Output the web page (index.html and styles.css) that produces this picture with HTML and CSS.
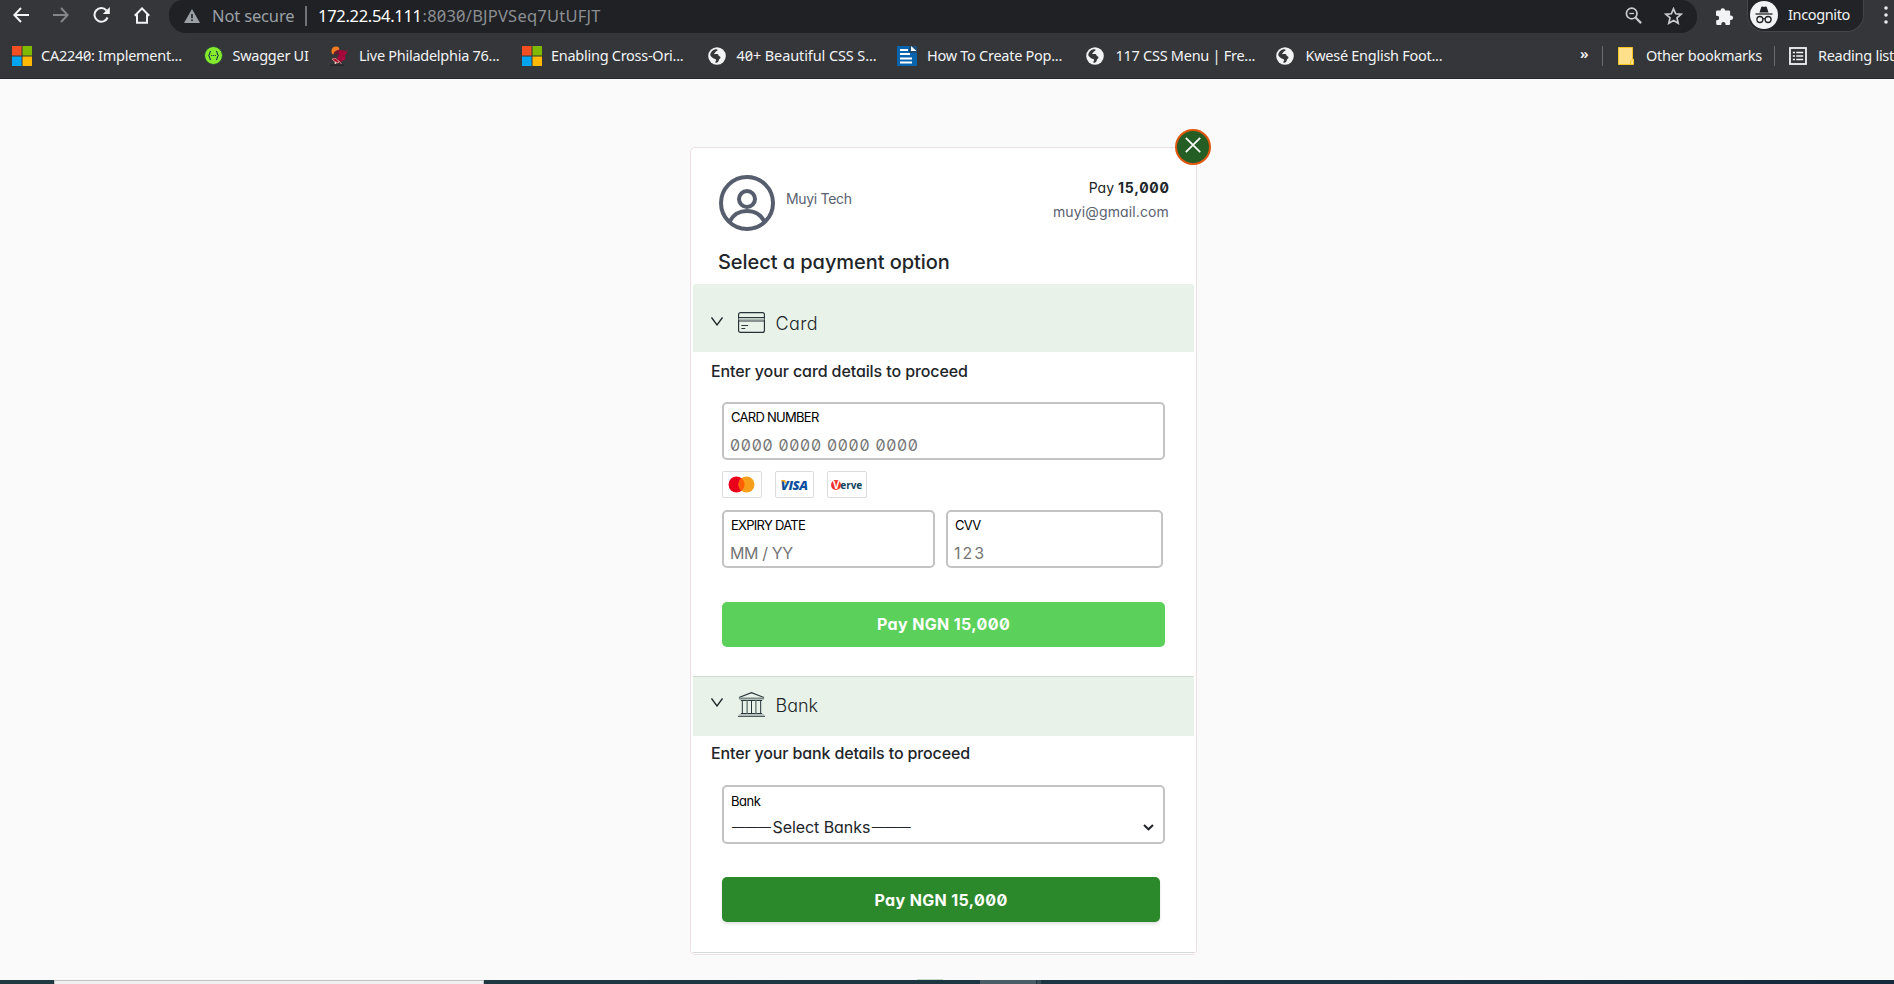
FILE: index.html
```html
<!DOCTYPE html>
<html lang="en">
<head>
<meta charset="utf-8">
<title>Payment</title>
<link rel="stylesheet" href="styles.css">
</head>
<body>
<svg width="0" height="0" class="defs">
  <symbol id="globe" viewBox="0 0 18 18"><circle cx="9" cy="9" r="8.8" fill="#f1f3f4"/><path d="M8.500 2.300c1.800.2 1 1.500-.2 1.900-1.100.4-.6 1.300-1.600 1.700-1 .4-.4 1.400.6 1.200 1.500-.3 3.300-.1 3.300 1.400 0 1.200 1.900.5 1.900 1.800 0 1.500-1.400 1.500-1.700 2.900-.3 1.300-1.200 2.400-2.500 2.600-1.200.2-1.300-.9-.6-1.600.8-.9.4-1.800-.7-2.100C5.300 11.600 3 10 2.300 8.300 2.300 5 5.200 2.300 8.500 2.300z" fill="#35363a"/></symbol>
  <symbol id="ms" viewBox="0 0 20 20"><path fill="#f25022" d="M0 0h9.500v9.500H0z"/><path fill="#7fba00" d="M10.500 0H20v9.500h-9.500z"/><path fill="#00a4ef" d="M0 10.500h9.500V20H0z"/><path fill="#ffb900" d="M10.500 10.500H20V20h-9.500z"/></symbol>
</svg>

<header class="browser">
  <div class="toolbar">
    <nav class="nav">
      <svg width="16" height="16" viewBox="0 0 16 16" fill="none" stroke="#f1f3f4" stroke-width="2"><path d="M16 8H1.500M8 1L1.300 8 8 15"/></svg>
      <svg width="16" height="16" viewBox="0 0 16 16" fill="none" stroke="#85868a" stroke-width="2"><path d="M0 8h14.500M8 1l6.700 7L8 15"/></svg>
      <svg width="17" height="16" viewBox="0 0 17 16" fill="none" stroke="#f1f3f4" stroke-width="2"><path d="M14.600 10.500A6.800 6.800 0 1 1 13.500 3.500"/><path d="M16.800 0v7H9.800z" fill="#f1f3f4" stroke="none"/></svg>
      <svg width="16" height="17" viewBox="0 0 16 17" fill="none" stroke="#f1f3f4" stroke-width="2"><path d="M.8 8.700L8 1.400l7.200 7.300M3 7.500V15.700h10V7.500"/></svg>
    </nav>
    <div class="omnibox">
      <svg class="warn" width="16" height="14" viewBox="0 0 16 14"><path d="M8 0l8 14H0z" fill="#9aa0a6"/><path d="M7.200 5h1.600v4.300H7.200zM7.200 10.500h1.600v1.600H7.200z" fill="#202124"/></svg>
      <span class="notsecure">Not secure</span>
      <span class="bar"></span>
      <span class="host">172.22.54.111</span><span class="path">:8030/BJPVSeq7UtUFJT</span>
      <svg class="mag" width="17" height="17" viewBox="0 0 17 17" fill="none" stroke="#c8cacd"><circle cx="6.700" cy="6.500" r="5.300" stroke-width="1.700"/><path d="M10.500 10.500l5.600 5.600" stroke-width="2.200"/><path d="M4.300 6.500h4.800" stroke-width="1.300"/></svg>
      <svg width="19" height="18" viewBox="0 0 19 18" fill="none" stroke="#c8cacd" stroke-width="1.700"><path d="M9.500 1.800l2.200 5 5.400.5-4.100 3.600 1.200 5.300-4.700-2.800-4.700 2.800L6 10.900 1.900 7.300l5.400-.5z"/></svg>
    </div>
    <svg class="puzzle" width="19" height="18" viewBox="0 0 19 18"><path d="M5.500 3.500a2.300 2.300 0 0 1 4.600 0h3.700a1.300 1.300 0 0 1 1.300 1.300v3.600h.7a2.300 2.300 0 0 1 0 4.600h-.7v3.700a1.300 1.300 0 0 1-1.300 1.300h-3.300v-.9a2.100 2.100 0 0 0-4.200 0v.9H2.500a1.300 1.300 0 0 1-1.300-1.300v-3.400h.7a2.300 2.300 0 0 0 0-4.600h-.9V4.800a1.300 1.300 0 0 1 1.300-1.300z" fill="#f1f3f4"/></svg>
    <div class="incognito">
      <svg width="28" height="28" viewBox="0 0 28 28"><circle cx="14" cy="14" r="14" fill="#f1f3f4"/><path d="M9.500 11.500l1.700-5.300c.2-.6.6-.8 1.200-.6l1.600.5 1.600-.5c.6-.2 1 0 1.200.6l1.700 5.300z" fill="#202124"/><path d="M5.500 13h17" stroke="#202124" stroke-width="1.300"/><g fill="none" stroke="#202124" stroke-width="1.300"><circle cx="9.900" cy="18.500" r="3"/><circle cx="18.100" cy="18.500" r="3"/><path d="M12.900 18q1.100-.8 2.200 0"/></g></svg>
      <span>Incognito</span>
    </div>
    <svg class="dots" width="4" height="18" viewBox="0 0 4 18" fill="#e8eaed"><circle cx="2" cy="2" r="1.800"/><circle cx="2" cy="9" r="1.800"/><circle cx="2" cy="16" r="1.800"/></svg>
  </div>
  <div class="bookmarks">
    <div class="bm b1"><svg width="20" height="20"><use href="#ms"/></svg><span>CA2240: Implement...</span></div>
    <div class="bm b2"><svg width="19" height="19" viewBox="0 0 19 19"><circle cx="9.500" cy="9.500" r="9" fill="#85ea2d" stroke="#2b4a3a"/><path d="M7 5.200C5 5.200 6.600 9 4.300 9.500 6.600 10 5 13.800 7 13.800M12 5.200c2 0 .4 3.800 2.700 4.300-2.300.5-.7 4.300-2.700 4.300" fill="none" stroke="#173647" stroke-width="1.100"/><path d="M7 9.500h5" stroke="#173647" stroke-width="1.200" stroke-dasharray="1.100 .8"/></svg><span>Swagger UI</span></div>
    <div class="bm b3"><svg width="19" height="20" viewBox="0 0 19 20"><path d="M8 4l7 .5 2.500 2L15 9l.8 4-5 3-4-3.500L9 8z" fill="#a5083a"/><path d="M16 5l2-.8" stroke="#7a2a3c"/><path d="M1.500 4.500C2 1.500 4 .3 6.500.6 8.500.8 9.500 2 9.300 3.500L6 5l-3 3.500C2 8 1.300 6 1.500 4.500z" fill="#f47b20"/><path d="M4 6l4-2 1 3.500-4 1.500z" fill="#6b1730"/><path d="M2 13l4-.5 3 3.500-1 1-4-2zM8.500 14.500l3 3.500" stroke="#d9827c" fill="#a5082f"/><circle cx="5.500" cy="17" r="1" fill="#f0d8d0"/><path d="M0 19.200h14" stroke="#252529" stroke-width="1.300"/></svg><span>Live Philadelphia 76...</span></div>
    <div class="bm b4"><svg width="20" height="20"><use href="#ms"/></svg><span>Enabling Cross-Ori...</span></div>
    <div class="bm b5"><svg width="18" height="18"><use href="#globe"/></svg><span>40+ Beautiful CSS S...</span></div>
    <div class="bm b6"><svg width="20" height="20" viewBox="0 0 20 20"><path d="M0 0h20v20H0z" fill="#0a64ad"/><path d="M12 0h8v7h-8z" fill="#1b4d78"/><path d="M14 0v5h5.500z" fill="#fff"/><path d="M3 4h8M3 8h10M3 12.500h12M3 16.500h12" stroke="#fff" stroke-width="2"/></svg><span>How To Create Pop...</span></div>
    <div class="bm b7"><svg width="18" height="18"><use href="#globe"/></svg><span>117 CSS Menu | Fre...</span></div>
    <div class="bm b8"><svg width="18" height="18"><use href="#globe"/></svg><span>Kwesé English Foot...</span></div>
    <span class="more">»</span>
    <span class="sep"></span>
    <div class="bm b9"><svg width="16" height="18" viewBox="0 0 16 18"><path d="M.5.500h14v11.500h1v5.500H.5z" fill="#fee08a" stroke="#f3c626"/><path d="M12.500 17v-3l2.500-1.500" fill="none" stroke="#f3c626"/></svg><span>Other bookmarks</span></div>
    <span class="sep s2"></span>
    <div class="bm b10"><svg width="18" height="18" viewBox="0 0 18 18"><rect x="1" y="1" width="16" height="16" fill="none" stroke="#f1f3f4" stroke-width="1.800"/><path d="M3.800 5.500h2.200M3.800 9h2.200M3.800 12.500h2.200M7.200 5.500h7M7.200 9h7M7.200 12.500h7" stroke="#f1f3f4" stroke-width="1.700"/></svg><span>Reading list</span></div>
  </div>
</header>

<main class="page">
  <section class="card">
    <button class="close" aria-label="Close"><svg width="16" height="16" viewBox="0 0 16 16"><path d="M.8.800l14.400 14.400M15.200.800L.8 15.200" stroke="#fff" stroke-width="1.700"/></svg></button>
    <div class="head">
      <svg width="56" height="56" viewBox="0 0 56 56" fill="none" stroke="#565e6e" stroke-width="4"><circle cx="28" cy="28" r="26"/><circle cx="28" cy="24" r="8"/><path d="M10.500 46.500C14 40 20 36 28 36s14 4 17.500 10.500"/></svg>
      <span class="merchant">Muyi Tech</span>
      <div class="payer">
        <div class="due"><span>Pay</span> <b>15,000</b></div>
        <div class="email">muyi@gmail.com</div>
      </div>
    </div>
    <h1>Select a payment option</h1>

    <div class="band band-card">
      <svg class="chev" width="12" height="9" viewBox="0 0 12 9"><path d="M.5.500L6 8 11.500.500" fill="none" stroke="#212529" stroke-width="1.300"/></svg>
      <svg class="ico" width="27" height="21" viewBox="0 0 28 21" preserveAspectRatio="none" fill="none" stroke="#263238"><rect x=".6" y=".6" width="26.800" height="19.800" rx="2" stroke-width="1.200"/><path d="M.5 5.500h27M.5 9h27"/><path d="M.5 7.200h27" stroke="#a9b5af" stroke-width="1.500"/><path d="M3.500 13.500h7M3.500 16.500h4"/></svg>
      <span>Card</span>
    </div>
    <h2>Enter your card details to proceed</h2>
    <div class="form">
      <div class="field"><label>CARD NUMBER</label><div class="ph number">0000 0000 0000 0000</div></div>
      <div class="brands">
        <div class="brand"><svg width="27" height="17" viewBox="0 0 27 17"><circle cx="8.500" cy="8.500" r="8" fill="#eb001b"/><circle cx="18.500" cy="8.500" r="8" fill="#f79e1b"/><path d="M13.500 2.200a8 8 0 0 1 0 12.600 8 8 0 0 1 0-12.600z" fill="#ff5f00"/></svg></div>
        <div class="brand visa"><svg width="6" height="5" viewBox="0 0 6 5"><path d="M0 0h4l1.800 4.500Q3.500 1.500 0 .4z" fill="#f7a81b"/></svg>VISA</div>
        <div class="brand verve"><span class="v">V</span>erve</div>
      </div>
      <div class="pair">
        <div class="field expiry"><label>EXPIRY DATE</label><div class="ph mmyy">MM / YY</div></div>
        <div class="field cvv"><label>CVV</label><div class="ph code">123</div></div>
      </div>
      <button class="pay light">Pay NGN 15,000</button>
    </div>

    <div class="band band-bank">
      <svg class="chev" width="12" height="9" viewBox="0 0 12 9"><path d="M.5.500L6 8 11.500.500" fill="none" stroke="#212529" stroke-width="1.300"/></svg>
      <svg class="ico" width="27" height="25" viewBox="0 0 28 25" preserveAspectRatio="none" fill="none" stroke="#263238"><path d="M1 5.500L14 .7l13 4.800" stroke-width="1.100"/><path d="M1 6.500h26" stroke="#7d8b87" stroke-width="2"/><path d="M3 8.500h22M3 21.500h22M0 24.300h28"/><path d="M1 23h26" stroke="#a9b5af" stroke-width="1.500"/><path d="M4.500 8.500v13M14 8.500v13M23.500 8.500v13"/><path d="M9.500 8.500v13M18.500 8.500v13" stroke="#7d8b87" stroke-width="1.700"/></svg>
      <span>Bank</span>
    </div>
    <h2 class="bank-title">Enter your bank details to proceed</h2>
    <div class="form bank-form">
      <div class="field select"><label class="mixed">Bank</label><div class="value"><i>———</i><span>Select Banks</span><i>———</i><svg width="11" height="7" viewBox="0 0 11 7"><path d="M1 1l4.500 4.300L10 1" fill="none" stroke="#212529" stroke-width="2"/></svg></div></div>
      <button class="pay dark">Pay NGN 15,000</button>
    </div>
    <div class="endline"></div>
  </section>
</main>
<footer class="taskbar"><div class="window"></div><div class="peek"></div><div class="tab"></div><div class="tab2"></div></footer>
</body>
</html>
```

FILE: styles.css
```css
* { box-sizing: border-box; }
body { margin: 0; width: 1894px; height: 984px; overflow: hidden; display: flex; flex-direction: column; background: #fafafa; font-family: Inter, sans-serif; font-feature-settings: "cv11", "zero"; color: #212529; white-space: nowrap; }
svg { display: block; flex: none; }
.defs { position: absolute; }
button { border: 0; padding: 0; font: inherit; font-feature-settings: inherit; color: inherit; }

.browser { height: 79px; flex: none; background: #35363a; border-bottom: 1px solid #26272a; font-family: "Noto Sans", sans-serif; color: #f1f3f4; overflow: hidden; }
.toolbar { height: 33px; display: flex; align-items: flex-start; }
.nav { display: flex; gap: 24px; padding: 7px 0 0 13px; width: 169px; }
.omnibox { width: 1528px; height: 33px; background: #202124; border-radius: 14px 16px 16px 17px; display: flex; align-items: center; padding: 0 14px 2px 15px; font-size: 16.5px; color: #9aa0a6; }
.warn { margin-right: 12px; }
.notsecure { width: 93px; letter-spacing: -.15px; }
.bar { width: 2px; height: 20px; background: #6f7276; margin-right: 11px; }
.host { width: 104.500px; color: #fff; letter-spacing: -.3px; }
.path { color: #8b8e92; letter-spacing: .22px; }
.mag { margin: 0 22px 0 auto; }
.puzzle { margin: 7px 0 0 18px; }
.incognito { width: 117px; height: 33px; margin: -1px 0 0 13px; border-radius: 0 0 17px 17px; background: #222327; border: 1px solid #45464a; border-top: 0; display: flex; align-items: center; gap: 10px; padding-left: 2px; font-size: 14.5px; letter-spacing: -.36px; }
.incognito span { margin-top: -2px; }
.dots { margin: 6px 0 0 20px; }

.bookmarks { height: 45px; display: flex; align-items: center; font-size: 14.5px; letter-spacing: -.27px; }
.bm { display: flex; align-items: center; flex: none; gap: 10px; }
.bm span { margin-top: -2px; }
.b1 { margin-left: 12px; width: 191.500px; gap: 9px; }
.b2 { width: 126.5px; }
.b3 { width: 192px; }
.b4 { width: 185.500px; gap: 9px; }
.b5 { width: 189.500px; letter-spacing: -.1px; gap: 11px; }
.b6 { width: 188.500px; }
.b7 { width: 190px; gap: 12px; }
.b8 { width: 304.500px; gap: 12px; }
.more { width: 22px; font-size: 15px; font-weight: 600; margin-top: -5px; }
.sep { width: 1px; height: 20px; background: #6b6c70; margin-right: 15px; }
.b9 { width: 156px; gap: 12px; }
.s2 { margin-right: 14px; }
.b10 { gap: 11px; }

.page { flex: 1; display: flex; align-items: flex-start; padding: 68px 0 0 690px; }
.card { position: relative; width: 507px; height: 808px; background: #fff; border: 1px solid #eedfe2; border-radius: 5px; padding: 0 2px; }
.close { position: absolute; right: -15px; top: -19px; width: 36px; height: 36px; border-radius: 50%; background: #255e25; border: 2px solid #e0560f; display: flex; justify-content: center; padding-top: 6px; }
.head { height: 100px; display: flex; padding: 27px 25px 0 26px; font-size: 14px; line-height: 20px; }
.merchant { margin: 14px 0 0 11px; color: #5a6270; letter-spacing: -.32px; }
.payer { margin-left: auto; padding-top: 3px; text-align: right; }
.due b { letter-spacing: .75px; margin-right: -.75px; }
.email { margin-top: 4px; color: #5a6270; letter-spacing: .13px; }
h1 { margin: 0 0 8px 25px; font-size: 20px; line-height: 28px; font-weight: 550; letter-spacing: -.06px; }
.band { background: #e8f2e8; display: flex; align-items: flex-start; padding-left: 18px; font-size: 18px; line-height: 28px; font-weight: 350; }
.ico { margin: 0 11px 0 14.500px; }
.band-card { height: 68px; border-radius: 3px 3px 0 0; padding-top: 25px; letter-spacing: .4px; }
.band-card .chev { margin-top: 8px; }
.band-card .ico { margin-top: 3px; }
.band-card span { margin-top: 1px; }
.band-bank { height: 60px; padding-top: 14px; border-top: 1px solid #d3dad4; }
.band-bank .chev { margin-top: 7px; }
.band-bank .ico { margin-top: 1px; }
.band-bank span { margin-top: 1px; }
h2 { margin: 7px 0 0 18px; font-size: 16px; line-height: 24px; font-weight: 550; letter-spacing: -.1px; }
.form { margin: 19px 29px 0 29px; height: 274px; }
.field { height: 58px; border: 2px solid #c3c3c3; border-radius: 5px; padding: 4px 7px; }
label { display: block; color: #000; font-size: 13px; line-height: 18px; letter-spacing: -.72px; }
label.mixed { letter-spacing: -.5px; }
.ph { margin: 7px 0 0 -1px; font-size: 16px; line-height: 24px; color: #757575; }
.number { letter-spacing: .72px; }
.mmyy { letter-spacing: -.4px; }
.code { letter-spacing: 2px; }
.brands { display: flex; gap: 13px; margin: 11px 0 12px; height: 27px; }
.brand { width: 39.500px; border: 1px solid #dcdcdc; border-radius: 2px; display: flex; align-items: center; justify-content: center; }
.visa { position: relative; font: italic 800 13px "Open Sans", sans-serif; color: #0e4fa0; letter-spacing: -.4px; }
.visa svg { position: absolute; left: 5px; top: 8px; }
.verve { font: 700 10px "Open Sans", sans-serif; color: #12455e; }
.v { width: 10px; height: 10px; margin-right: -1px; border-radius: 50%; background: #ee312a; color: #fff; line-height: 10px; text-align: center; }
.pair { display: flex; gap: 11px; }
.expiry { width: 213px; }
.cvv { width: 217px; }
.pay { display: block; width: 443px; height: 45px; border-radius: 5px; color: #fff; font-size: 16px; font-weight: 700; line-height: 24px; letter-spacing: .38px; }
.light { margin-top: 34px; padding-bottom: 2px; background: #5bd15b; }
.bank-title { margin-top: 5px; letter-spacing: -.14px; }
.bank-form { margin-top: 20px; height: 167px; }
.select { height: 59px; padding-top: 5px; }
.value { display: flex; align-items: center; margin: 5px 0 0 1px; font-size: 16px; line-height: 24px; letter-spacing: -.07px; }
.value i { font: 13px/24px "Liberation Sans", sans-serif; letter-spacing: 0; width: 39px; }
.value span { margin: 0 1.500px; }
.value svg { margin: 0 2px 0 auto; }
.dark { width: 438px; margin-top: 33px; background: #2b882b; box-shadow: 0 2px 3px rgba(0,0,0,.12); }
.endline { height: 1px; background: #d6d6d6; }

.taskbar { height: 4px; flex: none; display: flex; background: linear-gradient(90deg, #203a42, #1b3442 70%, #15283c); }
.window { width: 430px; margin-left: 54px; background: #f0f0f0; border: 1px solid #bfc3c0; border-bottom: 0; }
.peek { width: 26px; height: 1px; margin: -1px 37px 0 433px; background: #c3dcc3; }
.tab { width: 56px; background: #4b5d66; }
.tab2 { margin-left: 1px; width: 4px; background: #394b55; }
```
